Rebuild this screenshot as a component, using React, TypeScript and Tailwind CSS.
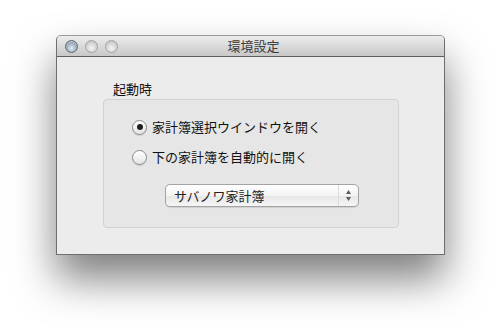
import React from "react";

const jp = { fontFamily: '"Lucida Grande", "Noto Sans CJK JP", "Noto Sans", sans-serif' };

function Light({ active }: { active?: boolean }) {
  return (
    <div
      className={
        active
          ? "w-[13px] h-[13px] rounded-full border border-[#5d6975] bg-[radial-gradient(circle_at_50%_65%,#e4edf4_0%,#a9b8c5_45%,#6f7f8d_100%)] shadow-[inset_0_1px_1px_rgba(255,255,255,0.5)]"
          : "w-[13px] h-[13px] rounded-full border border-[#a2a2a2] bg-[radial-gradient(circle_at_50%_65%,#f4f4f4_0%,#dadada_45%,#b9b9b9_100%)]"
      }
    />
  );
}

function Radio({ checked }: { checked?: boolean }) {
  return (
    <div className="w-[15px] h-[15px] rounded-full border border-[#8b8b8b] bg-[linear-gradient(#ffffff,#e4e4e4)] flex items-center justify-center shadow-[0_1px_1px_rgba(0,0,0,0.12)]">
      {checked && <div className="w-[6px] h-[6px] rounded-full bg-[#1e1e1e]" />}
    </div>
  );
}

export default function App() {
  return (
    <div className="w-[502px] h-[334px] bg-white overflow-hidden pt-[35px] pl-[56px]" style={jp}>
      <div className="w-[389px] h-[220px] rounded-t-[5px] border border-[#6e6e6e] border-t-[#9a9a9a] bg-[#ececec] shadow-[0_24px_42px_rgba(0,0,0,0.5)] flex flex-col overflow-hidden">
        <div className="h-[21px] shrink-0 bg-[linear-gradient(#ececec,#c8c8c8)] border-b border-[#5e5e5e] relative flex items-center">
          <div className="flex items-center gap-[7px] pl-[8px]">
            <Light active />
            <Light />
            <Light />
          </div>
          <div className="absolute inset-0 flex items-center justify-center text-[13px] text-[#3c3c3c] pl-[6px]">
            環境設定
          </div>
        </div>
        <div className="flex-1 pl-[46px] pt-[24px]">
          <div className="text-[13px] text-[#111] pl-[10px] leading-[16px]">起動時</div>
          <div className="mt-[2px] w-[296px] h-[129px] rounded-[4px] border border-[#d2d2d2] bg-[#e6e6e6] pl-[28px] pt-[17px]">
            <div className="flex items-center gap-[5px] h-[20px]">
              <Radio checked />
              <span className="text-[13px] text-[#111]">家計簿選択ウインドウを開く</span>
            </div>
            <div className="flex items-center gap-[5px] h-[20px] mt-[10px]">
              <Radio />
              <span className="text-[13px] text-[#111]">下の家計簿を自動的に開く</span>
            </div>
            <div className="ml-[33px] mt-[17px] w-[194px] h-[23px] rounded-[5px] border border-[#a3a3a3] bg-[linear-gradient(#ffffff,#f3f3f3_50%,#e6e6e6_51%,#f6f6f6)] shadow-[0_1px_1px_rgba(0,0,0,0.1)] flex items-center">
              <span className="flex-1 pl-[8px] text-[13px] text-[#222]">サバノワ家計簿</span>
              <div className="w-[20px] h-full border-l border-[#dcdcdc] flex flex-col items-center justify-center gap-[3px]">
                <svg width="5" height="4" viewBox="0 0 5 4"><path d="M2.5 0 L5 4 L0 4 Z" fill="#5a5a5a" /></svg>
                <svg width="5" height="4" viewBox="0 0 5 4"><path d="M0 0 L5 0 L2.5 4 Z" fill="#5a5a5a" /></svg>
              </div>
            </div>
          </div>
        </div>
      </div>
    </div>
  );
}
